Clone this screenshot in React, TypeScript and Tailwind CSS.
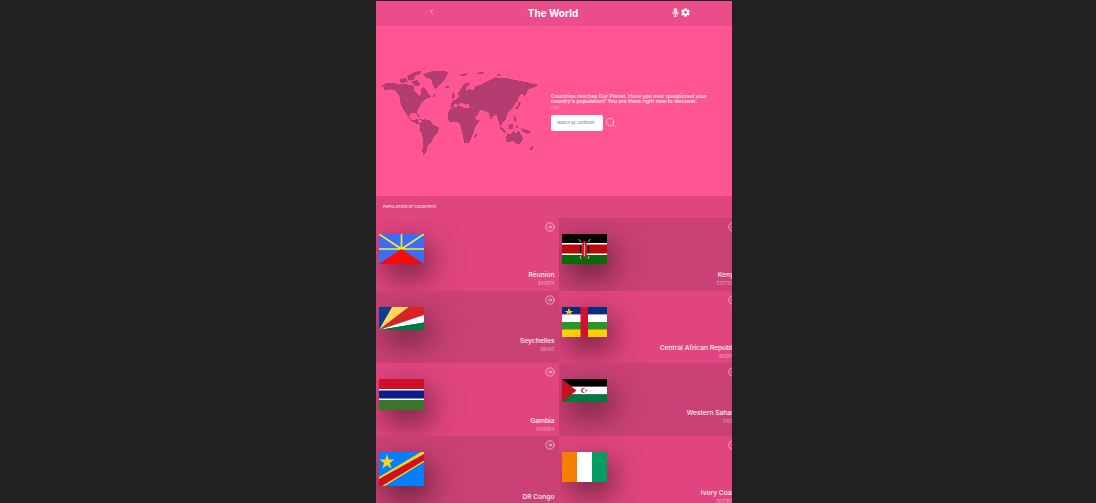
import React from 'react';
import { ChevronLeft, CircleArrowRight, Search } from 'lucide-react';
import { FaCog, FaMicrophone } from 'react-icons/fa';

const WorldMap = () => (
  <svg viewBox="376 60 175 110" className="w-[175px] h-[110px] shrink-0" fill="#b33d70" shapeRendering="crispEdges">
    <g transform="translate(378 66) scale(0.3333)">
      {/* north america */}
      <path d="M10,60 L30,50 L52,52 L70,55 L85,54 L100,58 L108,62 L108,72 L116,82 L124,90 L130,84 L128,70 L136,64 L146,72 L152,84 L160,92 L150,97 L140,100 L132,110 L126,120 L119,130 L118,140 L126,154 L120,152 L114,142 L100,142 L93,150 L98,160 L112,164 L118,158 L120,166 L130,174 L124,176 L112,172 L100,166 L90,152 L78,134 L68,115 L66,95 L52,74 L38,70 L24,72 L14,74 L20,66 Z" />
      <path d="M65,40 L82,36 L90,46 L76,52 L66,48 Z M88,30 L110,18 L128,14 L130,22 L112,30 L108,42 L92,44 Z M100,46 L118,42 L128,55 L120,62 L106,56 Z M165,86 L172,84 L172,92 L166,92 Z M120,158 L132,160 L141,165 L130,164 Z M144,167 L152,168 L152,171 L145,171 Z" />
      {/* greenland */}
      <path d="M135,25 L160,16 L190,14 L212,18 L205,32 L195,48 L180,62 L172,70 L165,58 L160,40 L145,35 Z" />
      <path d="M200,62 L212,60 L212,66 L202,67 Z" />
      {/* south america */}
      <path d="M128,172 L140,160 L155,162 L165,175 L183,184 L180,198 L170,210 L162,225 L150,240 L143,262 L137,268 L133,255 L136,225 L132,205 L124,190 Z" />
    </g>
    <g transform="translate(445 70) scale(0.3333)">
      {/* eurasia */}
      <path d="M18,102 L22,92 L35,88 L42,78 L38,70 L48,55 L60,40 L78,38 L70,46 L62,52 L64,62 L74,58 L85,60 L90,50 L105,45 L125,35 L150,22 L190,25 L220,32 L250,38 L283,45 L268,52 L250,58 L245,68 L240,80 L232,72 L222,78 L218,92 L208,105 L196,122 L188,130 L182,150 L172,160 L166,170 L160,150 L155,135 L147,135 L138,150 L130,128 L118,122 L105,120 L98,135 L85,145 L78,120 L70,102 L60,104 L48,98 L40,105 L30,100 L24,112 L16,110 Z" />
      {/* africa */}
      <path d="M8,128 L20,112 L45,108 L60,115 L78,115 L88,140 L95,150 L105,150 L90,172 L85,190 L72,220 L58,220 L52,190 L45,160 L30,155 L12,155 L8,140 Z" />
      <path d="M93,190 L96,195 L90,207 L88,200 Z" />
      {/* islands */}
      <path d="M25,65 L30,78 L22,88 L20,80 Z M222,95 L228,100 L220,115 L208,118 L218,108 Z M168,170 L182,185 L178,188 L165,175 Z M185,190 L205,194 L205,197 L185,194 Z M190,165 L205,160 L205,178 L192,178 Z M212,165 L220,168 L216,180 Z M228,175 L260,185 L250,192 L230,182 Z M205,135 L212,140 L216,155 L208,152 Z M46,12 L66,10 L66,16 L48,18 Z M95,8 L120,6 L112,12 L96,12 Z M155,10 L168,16 L158,20 Z M236,68 L240,80 L244,62 Z" />
      {/* australia */}
      <path d="M183,198 L198,190 L207,183 L213,190 L222,182 L234,205 L228,220 L215,222 L205,212 L188,218 L183,210 Z" />
      <path d="M262,228 L266,235 L255,242 L254,238 Z" />
    </g>
  </svg>
);

const Reunion = () => (
  <svg viewBox="0 0 45 30" className="block w-full h-full">
    <rect width="45" height="30" fill="#3f6cf5" />
    <path d="M22.5,15 L0,0 M22.5,15 L22.5,0 M22.5,15 L45,0 M0,15 L45,15" stroke="#f5ee2a" strokeWidth="1.6" />
    <path d="M22.5,15 L45,30 L0,30 Z" fill="#f50b0b" />
  </svg>
);

const Kenya = () => (
  <svg viewBox="0 0 45 30" className="block w-full h-full">
    <rect width="45" height="30" fill="#000" />
    <rect y="9" width="45" height="12" fill="#fff" />
    <rect y="10.5" width="45" height="9" fill="#b80a0a" />
    <rect y="21" width="45" height="9" fill="#0a6a0a" />
    <path d="M16.5,5 L19,8 M28.5,5 L26,8 M18,22 L19,25 M27,22 L26,25" stroke="#ddd" strokeWidth="0.8" />
    <path d="M18.5,12 L20,15.5 L18.5,19 Z M26.5,12 L25,15.5 L26.5,19 Z" fill="#000" stroke="#000" strokeWidth="1.2" />
    <ellipse cx="22.5" cy="15.5" rx="3.2" ry="8.5" fill="#cc1f2a" />
    <path d="M22.5,9 V22" stroke="#f3c6c6" strokeWidth="0.7" />
  </svg>
);

const Seychelles = () => (
  <svg viewBox="0 0 45 23" className="block w-full h-full">
    <rect width="45" height="23" fill="#0a3d8f" />
    <path d="M0,23 L13,0 L30,0 Z" fill="#fcd856" />
    <path d="M0,23 L30,0 L45,0 L45,8 Z" fill="#d92223" />
    <path d="M0,23 L45,8 L45,15.5 Z" fill="#fff" />
    <path d="M0,23 L45,15.5 L45,23 Z" fill="#007a3d" />
  </svg>
);

const CentralAfrican = () => (
  <svg viewBox="0 0 45 30" className="block w-full h-full">
    <rect width="45" height="7.5" fill="#003082" />
    <rect y="7.5" width="45" height="7.5" fill="#fff" />
    <rect y="15" width="45" height="7.5" fill="#289728" />
    <rect y="22.5" width="45" height="7.5" fill="#ffce00" />
    <rect x="18.5" width="7.5" height="30" fill="#d21034" />
    <path d="M7,1 L8.2,4.6 L11.5,4.6 L8.8,6.5 L9.8,9 L7,7.4 L4.2,9 L5.2,6.5 L2.5,4.6 L5.8,4.6 Z" fill="#ffce00" transform="scale(1 0.85)" />
  </svg>
);

const Gambia = () => (
  <svg viewBox="0 0 45 31" className="block w-full h-full">
    <rect width="45" height="10" fill="#ce1126" />
    <rect y="10" width="45" height="11" fill="#fff" />
    <rect y="11.5" width="45" height="8" fill="#0c1c8c" />
    <rect y="21" width="45" height="10" fill="#3a7728" />
  </svg>
);

const WesternSahara = () => (
  <svg viewBox="0 0 45 23" className="block w-full h-full">
    <rect width="45" height="7.7" fill="#000" />
    <rect y="7.7" width="45" height="7.6" fill="#fff" />
    <rect y="15.3" width="45" height="7.7" fill="#007a3d" />
    <path d="M0,0 L14.5,11.5 L0,23 Z" fill="#c4111b" />
    <circle cx="21.5" cy="11.5" r="2.4" fill="#c4111b" />
    <circle cx="22.4" cy="11.5" r="1.9" fill="#fff" />
    <path d="M23,11.5 L25.6,10.2 L24.9,11.5 L25.6,12.8 Z" fill="#c4111b" />
  </svg>
);

const DrCongo = () => (
  <svg viewBox="0 0 45 34" className="block w-full h-full">
    <rect width="45" height="34" fill="#007fff" />
    <path d="M0,25 L42,0 H45 V10 L6,34 H0 Z" fill="#f7d618" />
    <path d="M0,27 L45,2 V8.5 L3,34 H0 Z" fill="#ce1021" />
    <path d="M8,2 L9.8,7.6 L15.5,7.6 L10.9,11 L12.6,16.6 L8,13.2 L3.4,16.6 L5.1,11 L0.5,7.6 L6.2,7.6 Z" fill="#f7d618" />
  </svg>
);

const IvoryCoast = () => (
  <svg viewBox="0 0 45 30" className="block w-full h-full">
    <rect width="15" height="30" fill="#f77f00" />
    <rect x="15" width="15" height="30" fill="#fff" />
    <rect x="30" width="15" height="30" fill="#009e60" />
  </svg>
);

const countries = [
  { name: 'Réunion', population: 840974, flag: <Reunion />, flagSize: 'h-[30px]', bg: 'bg-[#e0457f]' },
  { name: 'Kenya', population: 53771300, flag: <Kenya />, flagSize: 'h-[30px]', bg: 'bg-[#ca4175]' },
  { name: 'Seychelles', population: 98462, flag: <Seychelles />, flagSize: 'h-[23px]', bg: 'bg-[#ca4175]' },
  { name: 'Central African Republic', population: 4829764, flag: <CentralAfrican />, flagSize: 'h-[30px]', bg: 'bg-[#e0457f]' },
  { name: 'Gambia', population: 2416664, flag: <Gambia />, flagSize: 'h-[31px]', bg: 'bg-[#e0457f]' },
  { name: 'Western Sahara', population: 510713, flag: <WesternSahara />, flagSize: 'h-[23px]', bg: 'bg-[#ca4175]' },
  { name: 'DR Congo', population: 108407721, flag: <DrCongo />, flagSize: 'h-[34px]', bg: 'bg-[#ca4175]' },
  { name: 'Ivory Coast', population: 26378275, flag: <IvoryCoast />, flagSize: 'h-[30px]', bg: 'bg-[#e0457f]' },
];

export default function App() {
  return (
    <div className="min-h-[503px] h-[503px] overflow-hidden bg-[#212121] pt-px pl-[376px] font-['Inter','Liberation_Sans',sans-serif]">
      <div className="w-[356px] h-[502px] overflow-hidden bg-[#ff5592] text-white">
        <header className="h-[25px] bg-[#eb4d8a] grid grid-cols-[112px_130px_1fr] items-center">
          <div className="flex justify-center -ml-[2px]">
            <ChevronLeft size={7} strokeWidth={2.5} className="text-white/90 -mt-[4px]" />
          </div>
          <h1 className="text-center text-[10px] font-bold">The World</h1>
          <div className="flex items-center gap-[1px] pl-[53px] -mt-[3px]">
            <FaMicrophone size={9} className="text-white/85" />
            <FaCog size={9} />
          </div>
        </header>

        <section className="h-[170px] flex items-center">
          <div className="mt-[8px]">
            <WorldMap />
          </div>
          <div className="w-[165px] mt-[2px]">
            <p className="text-[5.3px] leading-[5.5px] font-medium text-white/90">
              Countries reaches Our Planet. Have you ever questioned your country's population? You are there right now to discover.
            </p>
            <p className="text-[4px] leading-[5px] text-white/50">LIST</p>
            <div className="mt-[5px] flex items-center gap-[2px]">
              <div className="w-[52px] h-[16px] rounded-[2px] bg-white flex items-center pl-[6px] text-[4px] text-gray-500">
                search by continent
              </div>
              <Search size={11} strokeWidth={1.4} className="text-white/90" />
            </div>
          </div>
        </section>

        <div className="h-[22px] bg-[#e0457f] flex items-center pl-[7px] text-[3.8px] font-medium uppercase text-white/80">
          Population of countrys
        </div>

        <div className="grid grid-cols-[182.5px_183px] auto-rows-[72.5px]">
          {countries.map((c) => (
            <div key={c.name} className={`${c.bg} pt-[4px] overflow-hidden`}>
              <div className="flex justify-end pr-[4px] h-[12px]">
                <CircleArrowRight size={10} strokeWidth={1.5} className="text-white/85" />
              </div>
              <div className={`ml-[3px] w-[45px] ${c.flagSize} shadow-[6px_12px_30px_rgba(0,0,0,0.55)]`}>{c.flag}</div>
              <div className="mt-[7px] pr-[4px] text-right">
                <p className="text-[6.7px] leading-[9px] font-medium whitespace-nowrap text-white/90">{c.name}</p>
                <p className="text-[4.5px] leading-[7px] text-white/50">{c.population}</p>
              </div>
            </div>
          ))}
        </div>
      </div>
    </div>
  );
}
